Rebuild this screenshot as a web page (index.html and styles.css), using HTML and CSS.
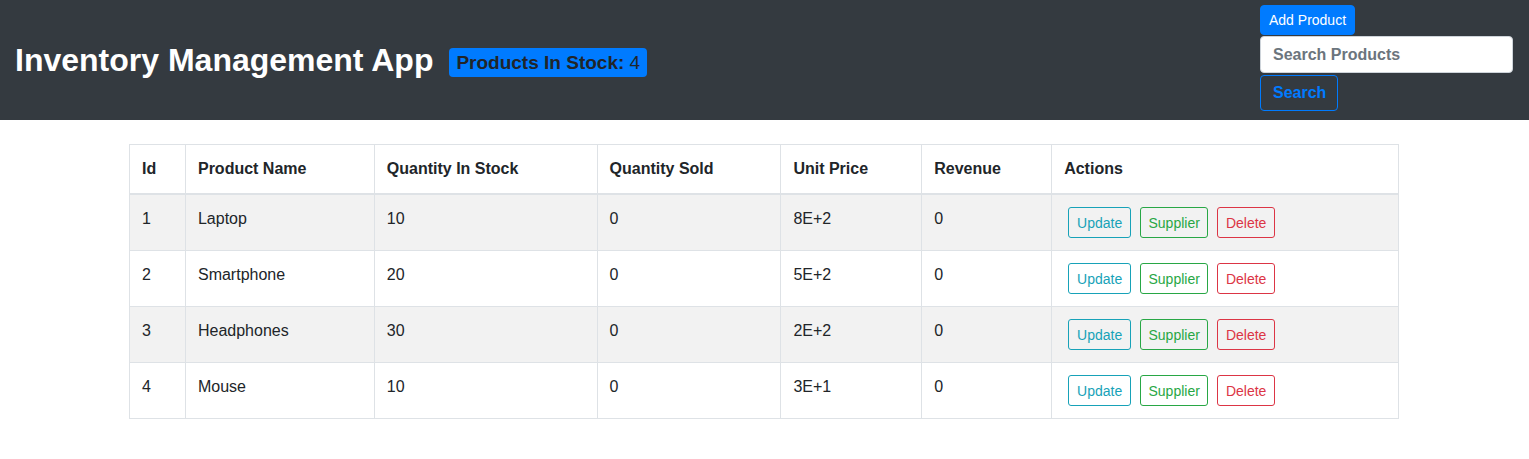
FILE: index.html
```html
<!DOCTYPE html>
<html>
<head>
<meta charset="utf-8">
<link rel="stylesheet" href="styles.css">
</head>
<body>
<header class="topbar">
  <div class="brand">
    <h1 class="title">Inventory Management App</h1>
    <span class="badge"><b>Products In Stock:</b> 4</span>
  </div>
  <div class="tools">
    <button class="btn btn-add">Add Product</button>
    <input class="search-input" type="text" placeholder="Search Products">
    <button class="btn btn-search">Search</button>
  </div>
</header>
<main class="content">
  <table class="grid">
    <colgroup>
      <col class="c-id"><col class="c-name"><col class="c-qty"><col class="c-sold"><col class="c-price"><col class="c-rev"><col class="c-act">
    </colgroup>
    <thead>
      <tr><th>Id</th><th>Product Name</th><th>Quantity In Stock</th><th>Quantity Sold</th><th>Unit Price</th><th>Revenue</th><th>Actions</th></tr>
    </thead>
    <tbody>
      <tr><td>1</td><td>Laptop</td><td>10</td><td>0</td><td>8E+2</td><td>0</td><td class="acts"><div class="act-row"><button class="act act-up">Update</button><button class="act act-sup">Supplier</button><button class="act act-del">Delete</button></div></td></tr>
      <tr><td>2</td><td>Smartphone</td><td>20</td><td>0</td><td>5E+2</td><td>0</td><td class="acts"><div class="act-row"><button class="act act-up">Update</button><button class="act act-sup">Supplier</button><button class="act act-del">Delete</button></div></td></tr>
      <tr><td>3</td><td>Headphones</td><td>30</td><td>0</td><td>2E+2</td><td>0</td><td class="acts"><div class="act-row"><button class="act act-up">Update</button><button class="act act-sup">Supplier</button><button class="act act-del">Delete</button></div></td></tr>
      <tr><td>4</td><td>Mouse</td><td>10</td><td>0</td><td>3E+1</td><td>0</td><td class="acts"><div class="act-row"><button class="act act-up">Update</button><button class="act act-sup">Supplier</button><button class="act act-del">Delete</button></div></td></tr>
    </tbody>
  </table>
</main>
</body>
</html>
```
FILE: styles.css
```css
* { box-sizing: border-box; }
html, body { margin: 0; padding: 0; }
body {
  font-family: "Liberation Sans", Arial, sans-serif;
  font-size: 16px;
  line-height: 1.5;
  color: #212529;
  background: #fff;
}
.topbar {
  height: 120px;
  background: #343a40;
  display: flex;
  justify-content: space-between;
  align-items: center;
  padding: 0 16px 0 15px;
}
.brand {
  display: flex;
  align-items: center;
  gap: 16px;
}
.title {
  margin: 0;
  color: #fff;
  font-size: 32px;
  font-weight: 700;
  line-height: 1.2;
}
.badge {
  background: #007bff;
  color: #212529;
  font-size: 19px;
  line-height: 21px;
  padding: 4px 7px;
  border-radius: 4px;
  font-weight: 400;
  margin-top: 5px;
}
.tools {
  align-self: flex-start;
  padding-top: 5px;
  width: 253px;
  display: flex;
  flex-direction: column;
  align-items: flex-start;
}
.btn {
  font-family: inherit;
  border-radius: 4px;
  cursor: pointer;
}
.btn-add {
  background: #007bff;
  border: 1px solid #007bff;
  color: #fff;
  font-size: 14px;
  line-height: 20px;
  padding: 4px 8px;
  height: 30px;
}
.search-input {
  margin-top: 1px;
  width: 253px;
  height: 37px;
  border: 1px solid #ced4da;
  border-radius: 4px;
  padding: 6px 12px;
  font-family: inherit;
  font-size: 16px;
  font-weight: 700;
  color: #495057;
  background: #fff;
}
.search-input::placeholder { color: #6c757d; opacity: 1; }
.btn-search {
  margin-top: 2px;
  background: transparent;
  border: 1px solid #007bff;
  color: #007bff;
  font-size: 16px;
  font-weight: 700;
  line-height: 24px;
  padding: 5px 12px;
  height: 36px;
  width: 78px;
}
.content {
  padding-top: 24px;
}
.grid {
  width: 1270px;
  margin: 0 0 0 129px;
  border-collapse: collapse;
  border: 1px solid #dee2e6;
}
.c-id { width: 56px; }
.c-name { width: 189px; }
.c-qty { width: 223px; }
.c-sold { width: 184px; }
.c-price { width: 141px; }
.c-rev { width: 130px; }
.c-act { width: 347px; }
.grid th, .grid td {
  border: 1px solid #dee2e6;
  padding: 12px;
  text-align: left;
  vertical-align: top;
  line-height: 24px;
}
.grid th {
  font-weight: 700;
  border-bottom-width: 2px;
}
.grid tbody tr:nth-child(odd) { background: #f2f2f2; }
.grid td { height: 55px; }
.grid td.acts { padding: 12px 12px 12px 16px; }
.act-row {
  display: flex;
  gap: 9px;
}
.act {
  font-family: inherit;
  font-size: 14px;
  line-height: 20px;
  padding: 4px 0;
  height: 31px;
  background: transparent;
  border: 1px solid;
  border-radius: 3px;
  text-align: center;
}
.act-up { width: 63px; color: #17a2b8; border-color: #17a2b8; }
.act-sup { width: 68px; color: #28a745; border-color: #28a745; }
.act-del { width: 58px; color: #dc3545; border-color: #dc3545; }
```
